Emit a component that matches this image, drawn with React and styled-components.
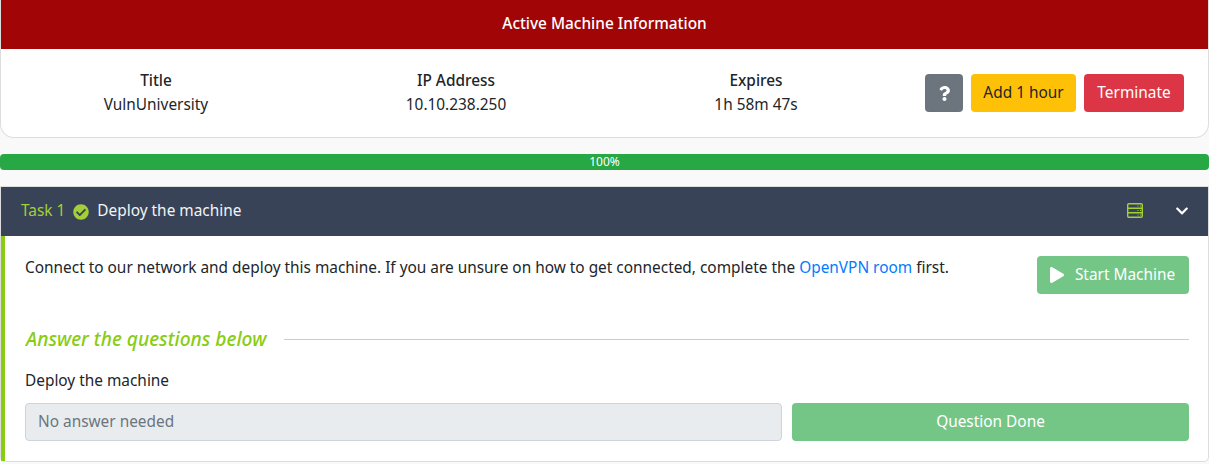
import styled, { createGlobalStyle } from 'styled-components';
import { FaCheckCircle, FaChevronDown, FaPlay, FaQuestion } from 'react-icons/fa';

const GlobalStyle = createGlobalStyle`
    body {
        margin: 0;
        background: #f9f9f9;
        font-family: "Noto Sans", "Open Sans", sans-serif;
        font-size: 15.4px;
        color: #212529;
    }
`;

const machineInfo = [
    { label: 'Title', value: 'VulnUniversity' },
    { label: 'IP Address', value: '10.10.238.250' },
    { label: 'Expires', value: '1h 58m 47s' },
];

function ServerIcon() {
    return (
        <svg width="16" height="15" viewBox="0 0 16 15" fill="none" stroke="#a3d039" strokeWidth="1.4">
            <rect x="0.7" y="0.7" width="14.6" height="13.6" rx="1.2" />
            <path d="M0.7 5.2H15.3M0.7 9.8H15.3" />
            <path d="M10.5 3H11.5M13 3H14M10.5 7.5H11.5M13 7.5H14M10.5 12H11.5M13 12H14" strokeWidth="1" />
        </svg>
    );
}

export default function App() {
    return (
        <>
            <GlobalStyle />
            <MachineCard>
                <MachineHeader>Active Machine Information</MachineHeader>
                <MachineBody>
                    <InfoColumns>
                        {machineInfo.map((item) => (
                            <InfoColumn key={item.label}>
                                <InfoLabel>{item.label}</InfoLabel>
                                <div>{item.value}</div>
                            </InfoColumn>
                        ))}
                    </InfoColumns>
                    <MachineActions>
                        <ActionButton $bg="#6c757d" $color="#fff" $width={38}><FaQuestion size={15} /></ActionButton>
                        <ActionButton $bg="#ffc107" $color="#212529" $width={105}><ButtonLabel>Add 1 hour</ButtonLabel></ActionButton>
                        <ActionButton $bg="#dc3545" $color="#fff" $width={100}><ButtonLabel>Terminate</ButtonLabel></ActionButton>
                    </MachineActions>
                </MachineBody>
            </MachineCard>

            <Progress>100%</Progress>

            <TaskCard>
                <TaskHeader>
                    <TaskNumber>Task 1</TaskNumber>
                    <FaCheckCircle size={16} color="#a3d039" />
                    <TaskTitle>Deploy the machine</TaskTitle>
                    <TaskIcons>
                        <ServerIcon />
                        <FaChevronDown size={14} color="#fff" />
                    </TaskIcons>
                </TaskHeader>
                <TaskBody>
                    <IntroRow>
                        <IntroText>
                            Connect to our network and deploy this machine. If you are unsure on how to get connected, complete the <IntroLink href="#">OpenVPN room</IntroLink> first.
                        </IntroText>
                        <StartButton><FaPlay size={16} /><ButtonLabel>Start Machine</ButtonLabel></StartButton>
                    </IntroRow>
                    <AnswerHeading>
                        <AnswerTitle>Answer the questions below</AnswerTitle>
                        <AnswerRule />
                    </AnswerHeading>
                    <QuestionText>Deploy the machine</QuestionText>
                    <AnswerRow>
                        <AnswerInput disabled placeholder="No answer needed" />
                        <DoneButton>Question Done</DoneButton>
                    </AnswerRow>
                </TaskBody>
            </TaskCard>
        </>
    );
}

const MachineCard = styled.div`
    height: 138px;
    box-sizing: border-box;
    background: #fff;
    border: 1px solid #ddd;
    border-top: 0;
    border-radius: 0 0 14px 14px;
    overflow: hidden;
`;

const MachineHeader = styled.div`
    height: 49px;
    box-sizing: border-box;
    margin: 0 -1px;
    padding-bottom: 3px;
    background: #a10505;
    color: #fff;
    font-weight: 500;
    display: flex;
    align-items: center;
    justify-content: center;
`;

const MachineBody = styled.div`
    display: flex;
    align-items: center;
    height: 88px;
    padding: 0 24px 0 5px;
`;

const InfoColumns = styled.div`
    display: flex;
    flex: 1;
`;

const InfoColumn = styled.div`
    width: 300px;
    text-align: center;
    line-height: 24px;
`;

const InfoLabel = styled.div`
    font-weight: 500;
`;

const MachineActions = styled.div`
    display: flex;
    gap: 8px;
`;

const ActionButton = styled.button`
    width: ${(props) => props.$width}px;
    height: 38px;
    padding: 0;
    border: 0;
    border-radius: 4px;
    background: ${(props) => props.$bg};
    color: ${(props) => props.$color};
    font: inherit;
    display: flex;
    align-items: center;
    justify-content: center;
`;

const ButtonLabel = styled.span`
    padding-bottom: 2px;
`;

const Progress = styled.div`
    height: 16px;
    margin-top: 16px;
    border-radius: 4px;
    background: #28a745;
    color: #fff;
    font-size: 12px;
    line-height: 16px;
    text-align: center;
`;

const TaskCard = styled.div`
    margin-top: 16px;
    height: 276px;
    box-sizing: border-box;
    background: #fff;
    border: 1px solid #ddd;
    border-radius: 0 0 5px 5px;
    display: flex;
    flex-direction: column;
`;

const TaskHeader = styled.div`
    height: 49px;
    flex-shrink: 0;
    display: flex;
    align-items: center;
    padding: 0 19px 0 20px;
    gap: 8px;
    background: #394357;
`;

const TaskNumber = styled.span`
    color: #a3d039;
    padding-bottom: 3px;
`;

const TaskTitle = styled.span`
    color: #f2f4f7;
    padding-bottom: 3px;
`;

const TaskIcons = styled.div`
    margin-left: auto;
    padding-bottom: 2px;
    display: flex;
    align-items: center;
    gap: 32px;
`;

const TaskBody = styled.div`
    flex: 1;
    border-left: 4px solid #88cc14;
    padding: 20px 19px 0 20px;
`;

const IntroRow = styled.div`
    display: flex;
    align-items: flex-start;
    justify-content: space-between;
`;

const IntroText = styled.p`
    margin: 0;
    line-height: 23px;
`;

const IntroLink = styled.a`
    color: #007bff;
    text-decoration: none;
`;

const StartButton = styled.button`
    width: 152px;
    height: 38px;
    flex-shrink: 0;
    border: 0;
    border-radius: 4px;
    background: #74c687;
    color: #fff;
    font: inherit;
    display: flex;
    align-items: center;
    justify-content: center;
    gap: 10px;
    padding: 0 7px 0 5px;
`;

const AnswerHeading = styled.div`
    display: flex;
    align-items: center;
    gap: 18px;
    margin-top: 33px;
    padding-left: 1px;
`;

const AnswerTitle = styled.span`
    color: #88cc14;
    font-style: italic;
    font-size: 19.2px;
    font-weight: 500;
    line-height: 24px;
    padding-bottom: 1px;
`;

const AnswerRule = styled.div`
    flex: 1;
    height: 1px;
    background: #ccc;
`;

const QuestionText = styled.div`
    margin-top: 17px;
    line-height: 23px;
`;

const AnswerRow = styled.div`
    display: flex;
    gap: 10px;
    margin-top: 11px;
`;

const AnswerInput = styled.input`
    width: 757px;
    height: 38px;
    box-sizing: border-box;
    padding: 0 12px 1px;
    border: 1px solid #ced4da;
    border-radius: 4px;
    background: #e9ecef;
    font: inherit;
    color: #6c757d;
    &::placeholder { color: #6c757d; opacity: 1; }
`;

const DoneButton = styled.button`
    flex: 1;
    height: 38px;
    padding: 0 0 2px;
    border: 0;
    border-radius: 4px;
    background: #74c687;
    color: #fff;
    font: inherit;
`;
